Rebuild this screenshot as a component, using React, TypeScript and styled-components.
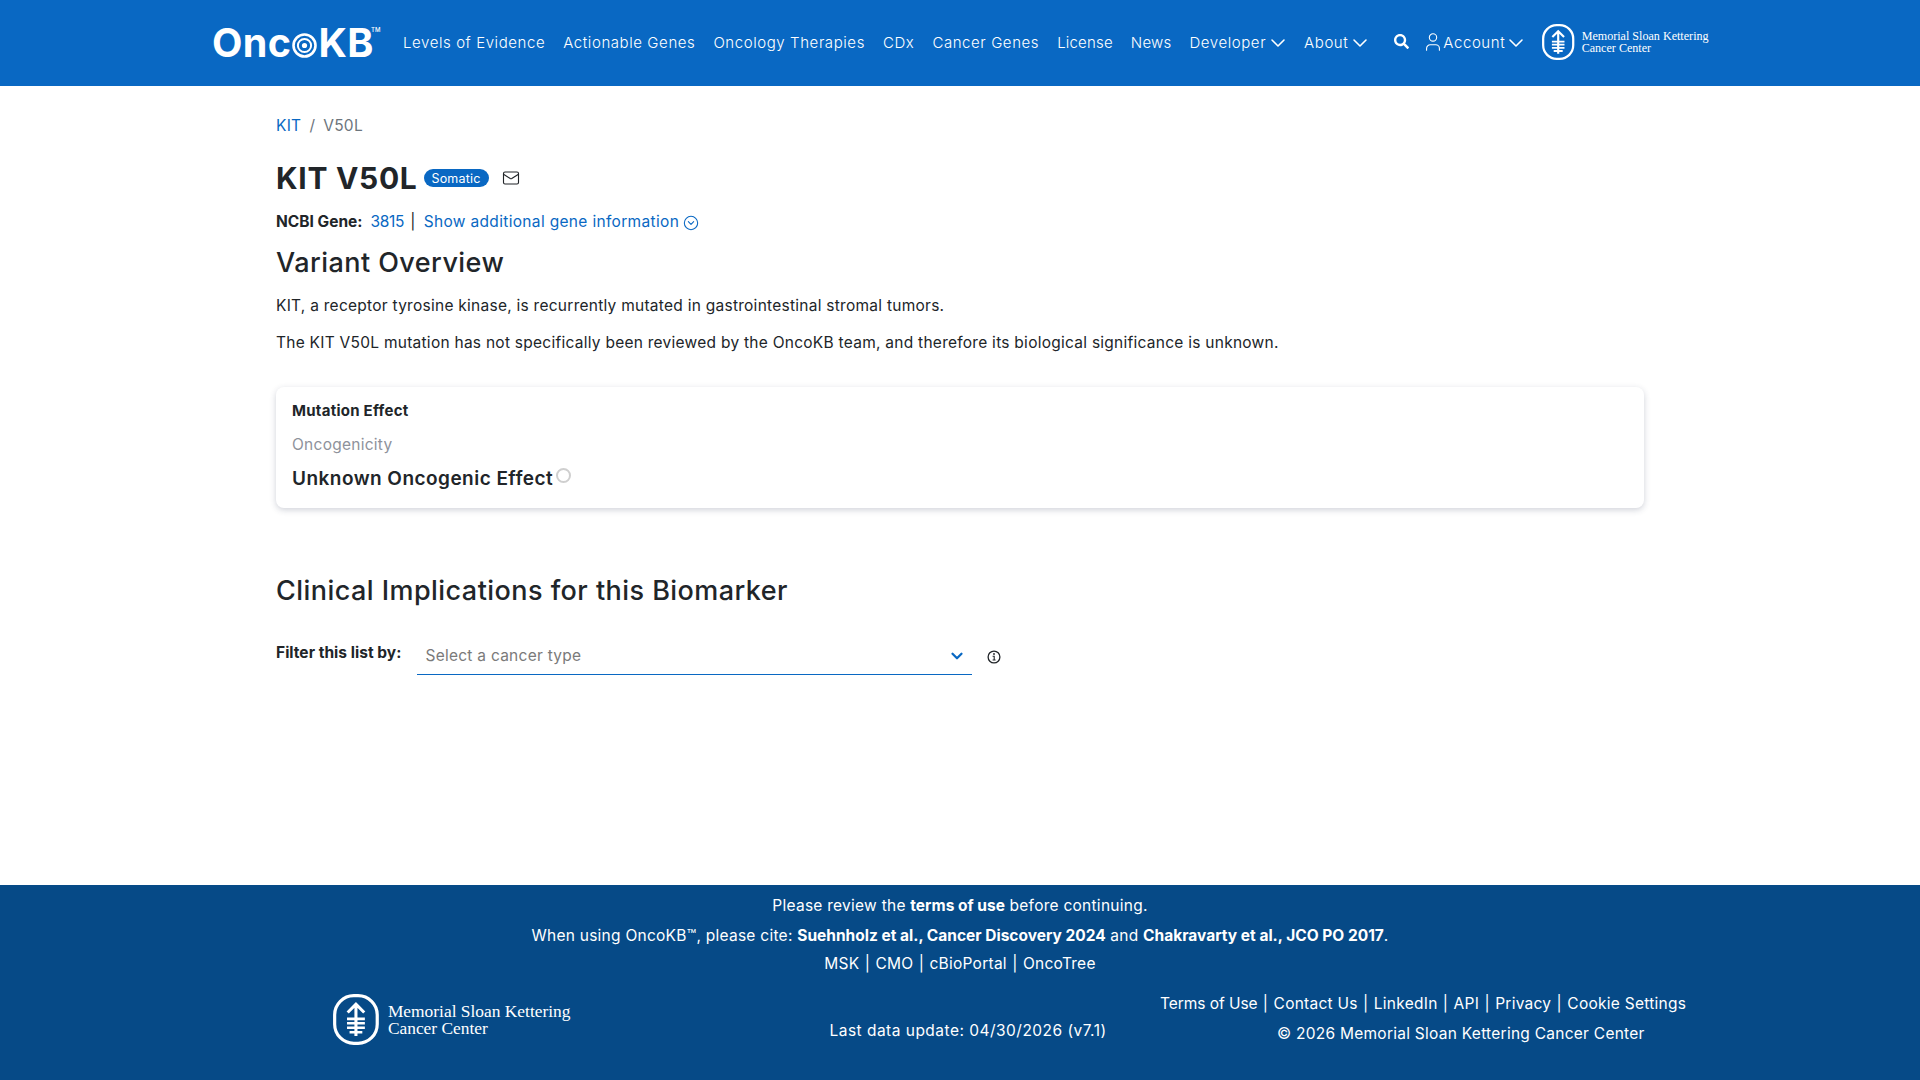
import React from 'react';
import styled, { createGlobalStyle } from 'styled-components';
import { ChevronDown, User, Mail, CircleChevronDown } from 'lucide-react';
import { FaSearch } from 'react-icons/fa';

const Global = createGlobalStyle`
  html, body { margin: 0; padding: 0; background: #fff; }
  body { font-family: Inter, "Open Sans", sans-serif; color: #212529; font-size: 16px; letter-spacing: .26px; }
  a { text-decoration: none; color: inherit; }
`;

const Page = styled.div`
  min-height: 1080px;
  display: flex;
  flex-direction: column;
`;

const Header = styled.header`
  height: 86px;
  background: #0968c3;
  color: #fff;
  display: flex;
  align-items: center;
  padding: 0 212px;
  box-sizing: border-box;
  flex: none;
`;

const LogoWrap = styled.a`
  display: flex;
  align-items: center;
  position: relative;
  font-family: Inter, sans-serif;
  font-weight: 700;
  font-size: 39.5px;
  letter-spacing: .4px;
  color: #fff;
  line-height: 1;
  width: 191px;
  flex: none;
  padding-top: 1px;
`;

const LogoTm = styled.sup`
  font-size: 6px;
  font-weight: 500;
  position: absolute;
  left: 159px;
  top: 4px;
  letter-spacing: 0;
`;

const Nav = styled.nav`
  display: flex;
  align-items: center;
  gap: 18px;
  font-size: 15px;
  font-weight: 300;
  letter-spacing: .58px;
  flex: none;
  padding-bottom: 2px;
`;

const NavItem = styled.a<{ $tight?: boolean }>`
  letter-spacing: ${p => (p.$tight ? '.2px' : '.58px')};
`;

const Dropdown = styled.a`
  display: flex;
  align-items: center;
  gap: 4px;
`;

const NavChevron = styled(ChevronDown)`
  margin: 1px -4px 0;
`;

const AccountIcon = styled(User)`
  margin: 0 -4px;
`;

const SearchLink = styled.a`
  display: flex;
  margin: -2px 0 0 8px;
`;

const AccountLink = styled(Dropdown)`
  gap: 3px;
`;

const RightTools = styled.div`
  display: flex;
  align-items: center;
  gap: 17px;
`;

const BrandSlot = styled.div`
  margin-left: 1px;
`;

const BrandMark = styled.a<{ $size: 'sm' | 'lg' }>`
  display: flex;
  align-items: center;
  gap: ${p => (p.$size === 'sm' ? '7px' : '9px')};
  color: #fff;
  flex: none;
  font-weight: 400;
`;

const BrandText = styled.div<{ $size: 'sm' | 'lg' }>`
  font-family: "Liberation Serif", serif;
  font-size: ${p => (p.$size === 'sm' ? '12.1px' : '17.4px')};
  line-height: ${p => (p.$size === 'sm' ? '12px' : '16.5px')};
  letter-spacing: 0;
  white-space: nowrap;
`;

const Main = styled.main`
  flex: 1;
  padding: 0 276px;
  box-sizing: border-box;
`;

const Breadcrumb = styled.div`
  display: flex;
  gap: 8px;
  margin-top: 30px;
  line-height: 20px;
  font-size: 15.5px;
  color: #6c757d;
`;

const BlueLink = styled.a`
  color: #0968c3;
`;

const GeneNumber = styled(BlueLink)`
  letter-spacing: -.3px;
`;

const TitleRow = styled.div`
  display: flex;
  align-items: center;
  margin-top: 22px;
  height: 40px;
`;

const Title = styled.h1`
  font-size: 30px;
  font-weight: 700;
  margin: 0;
  letter-spacing: .7px;
  line-height: 40px;
`;

const Badge = styled.span`
  margin-left: 6px;
  background: #0968c3;
  color: #fff;
  font-size: 12.5px;
  letter-spacing: .2px;
  width: 65px;
  height: 18px;
  border-radius: 9px;
  display: flex;
  align-items: center;
  justify-content: center;
`;

const MailButton = styled.span`
  display: flex;
  margin-left: 13px;
  color: #212529;
`;

const GeneLine = styled.div`
  display: flex;
  align-items: center;
  margin-top: 14px;
  line-height: 20px;
  font-size: 15.5px;
  letter-spacing: .33px;
`;

const GeneLabel = styled.strong`
  font-weight: 700;
  margin-right: 8px;
  letter-spacing: 0;
`;

const Pipe = styled.span`
  margin: 0 8px 0 6px;
`;

const InlineIcon = styled.span`
  display: flex;
  margin: 1px 0 0 4px;
  color: #0968c3;
`;

const SectionTitle = styled.h2<{ $top: number }>`
  font-size: 27px;
  font-weight: 500;
  margin: ${p => p.$top}px 0 0;
  line-height: 32px;
  letter-spacing: .45px;
`;

const Paragraph = styled.p<{ $top: number }>`
  margin: ${p => p.$top}px 0 0;
  font-size: 15.5px;
  line-height: 22px;
`;

const Card = styled.section`
  margin-top: 33px;
  height: 121px;
  box-sizing: border-box;
  background: #fff;
  border-radius: 8px;
  box-shadow: 0 2px 6px rgba(40, 50, 80, .22);
  padding: 15px 16px;
`;

const CardTitle = styled.div`
  font-size: 15px;
  font-weight: 700;
  line-height: 18px;
`;

const CardLabel = styled.div`
  margin-top: 15px;
  font-size: 15.5px;
  line-height: 20px;
  color: #8e929b;
`;

const EffectRow = styled.div`
  display: flex;
  align-items: flex-start;
  margin-top: 11px;
`;

const EffectValue = styled.div`
  font-size: 19px;
  font-weight: 600;
  line-height: 26px;
  letter-spacing: .46px;
`;

const EffectDot = styled.span`
  width: 15px;
  height: 15px;
  margin: 2px 0 0 3px;
  box-sizing: border-box;
  border: 2.5px solid #cfcfcf;
  border-radius: 50%;
`;

const FilterRow = styled.div`
  display: flex;
  margin-top: 31px;
`;

const FilterLabel = styled.label`
  font-size: 15.5px;
  font-weight: 700;
  line-height: 22px;
  margin: 4px 16px 0 0;
  letter-spacing: .03px;
`;

const SelectBox = styled.div`
  width: 555px;
  height: 37px;
  box-sizing: border-box;
  border-bottom: 1px solid #0968c3;
  display: flex;
  align-items: center;
  justify-content: space-between;
  padding: 0 6px 1px 8px;
  font-size: 15.5px;
  color: #7a7a7a;
`;

const SelectChevron = styled.span`
  display: flex;
  color: #0968c3;
`;

const InfoButton = styled.span`
  display: flex;
  margin: 12px 0 0 15px;
  color: #212529;
`;

const Footer = styled.footer`
  height: 195px;
  background: #064a87;
  color: #fff;
  flex: none;
  box-sizing: border-box;
  padding-top: 10px;
  font-size: 15.5px;
`;

const CenterLine = styled.div<{ $top: number }>`
  text-align: center;
  line-height: 22px;
  margin-top: ${p => p.$top}px;
`;

const Strong = styled.strong`
  font-weight: 700;
  letter-spacing: 0;
`;

const FootPipe = styled.span`
  margin: 0 5.3px;
`;

const FooterBottom = styled.div`
  display: flex;
  margin-top: 19px;
  padding-left: 333px;
`;

const FooterMiddle = styled.div`
  margin: 26px 0 0 259px;
  width: 330.5px;
  line-height: 22px;
  letter-spacing: .48px;
  white-space: nowrap;
`;

const FooterRight = styled.div`
  line-height: 22px;
  margin-top: -1px;
  white-space: nowrap;
`;

const FooterLinkTight = styled.span`
  letter-spacing: -.05px;
`;

const Copyright = styled.div`
  margin: 8px 0 0 117px;
`;

const MskIcon = ({ h }: { h: number }) => (
  <svg width={h * 0.9} height={h} viewBox="0 0 36 40" fill="none" stroke="currentColor">
    <rect x="1.3" y="1.3" width="33.4" height="37.4" rx="15" strokeWidth="2.5" />
    <path d="M18 8v25M11.5 14.5 18 8l6.5 6.5" strokeWidth="2.4" />
    <path d="M11 19.5h14M11 23h14M11 26.5h14M13 30h10" strokeWidth="2" />
  </svg>
);

const Target = () => (
  <svg width="25" height="25" viewBox="0 0 25 25" fill="none" stroke="#fff" style={{ margin: '4px 1px 0' }}>
    <circle cx="12.5" cy="12.5" r="11" strokeWidth="2.6" />
    <circle cx="12.5" cy="12.5" r="6.6" strokeWidth="2" />
    <circle cx="12.5" cy="12.5" r="2.6" fill="#fff" strokeWidth="0" />
  </svg>
);

const Brand = ({ size }: { size: 'sm' | 'lg' }) => (
  <BrandMark $size={size}>
    <MskIcon h={size === 'sm' ? 36 : 51} />
    <BrandText $size={size}>
      Memorial Sloan Kettering
      <br />
      Cancer Center
    </BrandText>
  </BrandMark>
);

const InfoIcon = () => (
  <svg width="14" height="14" viewBox="0 0 14 14" fill="none" stroke="currentColor">
    <circle cx="7" cy="7" r="5.9" strokeWidth="1.3" />
    <path d="M5.6 6.2H7.2V10M5.6 10H8.6" strokeWidth="1.1" />
    <circle cx="7" cy="4" r=".9" fill="currentColor" stroke="none" />
  </svg>
);

export default function App() {
  return (
    <Page>
      <Global />
      <Header>
        <LogoWrap>
          Onc
          <Target />
          KB
          <LogoTm>TM</LogoTm>
        </LogoWrap>
        <Nav>
          <NavItem>Levels of Evidence</NavItem>
          <NavItem>Actionable Genes</NavItem>
          <NavItem>Oncology Therapies</NavItem>
          <NavItem>CDx</NavItem>
          <NavItem>Cancer Genes</NavItem>
          <NavItem $tight>License</NavItem>
          <NavItem $tight>News</NavItem>
          <Dropdown>
            Developer
            <NavChevron size={24} strokeWidth={1.6} />
          </Dropdown>
          <Dropdown>
            About
            <NavChevron size={24} strokeWidth={1.6} />
          </Dropdown>
          <RightTools>
            <SearchLink>
              <FaSearch size={15} />
            </SearchLink>
            <AccountLink>
              <AccountIcon size={22} strokeWidth={1.2} />
              Account
              <NavChevron size={24} strokeWidth={1.6} />
            </AccountLink>
            <BrandSlot>
              <Brand size="sm" />
            </BrandSlot>
          </RightTools>
        </Nav>
      </Header>
      <Main>
        <Breadcrumb>
          <BlueLink>KIT</BlueLink>
          <span>/</span>
          <span>V50L</span>
        </Breadcrumb>
        <TitleRow>
          <Title>KIT V50L</Title>
          <Badge>Somatic</Badge>
          <MailButton>
            <Mail size={18} strokeWidth={1.5} />
          </MailButton>
        </TitleRow>
        <GeneLine>
          <GeneLabel>NCBI Gene:</GeneLabel>
          <GeneNumber>3815</GeneNumber>
          <Pipe>|</Pipe>
          <BlueLink>Show additional gene information</BlueLink>
          <InlineIcon>
            <CircleChevronDown size={16} strokeWidth={1.6} />
          </InlineIcon>
        </GeneLine>
        <SectionTitle $top={15}>Variant Overview</SectionTitle>
        <Paragraph $top={16}>KIT, a receptor tyrosine kinase, is recurrently mutated in gastrointestinal stromal tumors.</Paragraph>
        <Paragraph $top={15}>The KIT V50L mutation has not specifically been reviewed by the OncoKB team, and therefore its biological significance is unknown.</Paragraph>
        <Card>
          <CardTitle>Mutation Effect</CardTitle>
          <CardLabel>Oncogenicity</CardLabel>
          <EffectRow>
            <EffectValue>Unknown Oncogenic Effect</EffectValue>
            <EffectDot />
          </EffectRow>
        </Card>
        <SectionTitle $top={67}>Clinical Implications for this Biomarker</SectionTitle>
        <FilterRow>
          <FilterLabel>Filter this list by:</FilterLabel>
          <SelectBox>
            Select a cancer type
            <SelectChevron>
              <ChevronDown size={18} strokeWidth={3} />
            </SelectChevron>
          </SelectBox>
          <InfoButton>
            <InfoIcon />
          </InfoButton>
        </FilterRow>
      </Main>
      <Footer>
        <CenterLine $top={0}>
          Please review the <Strong>terms of use</Strong> before continuing.
        </CenterLine>
        <CenterLine $top={8}>
          When using OncoKB™, please cite: <Strong>Suehnholz et al., Cancer Discovery 2024</Strong> and{' '}
          <Strong>Chakravarty et al., JCO PO 2017</Strong>.
        </CenterLine>
        <CenterLine $top={6}>
          MSK<FootPipe>|</FootPipe>CMO<FootPipe>|</FootPipe>cBioPortal<FootPipe>|</FootPipe>OncoTree
        </CenterLine>
        <FooterBottom>
          <Brand size="lg" />
          <FooterMiddle>Last data update: 04/30/2026 (v7.1)</FooterMiddle>
          <FooterRight>
            <FooterLinkTight>Terms of Use</FooterLinkTight>
            <FootPipe>|</FootPipe>Contact Us<FootPipe>|</FootPipe>LinkedIn<FootPipe>|</FootPipe>API
            <FootPipe>|</FootPipe>Privacy<FootPipe>|</FootPipe>Cookie Settings
            <Copyright>© 2026 Memorial Sloan Kettering Cancer Center</Copyright>
          </FooterRight>
        </FooterBottom>
      </Footer>
    </Page>
  );
}
